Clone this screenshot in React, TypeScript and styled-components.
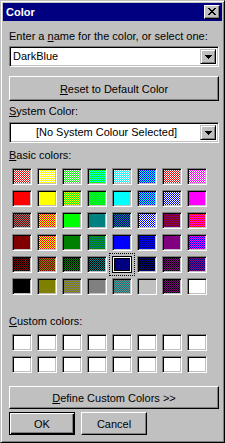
import React from "react";
import styled, { createGlobalStyle, css } from "styled-components";

const GlobalStyle = createGlobalStyle`
  html, body { margin: 0; padding: 0; background: #c0c0c0; }
  body { font-family: "Liberation Sans", Arial, sans-serif; font-size: 11px; }
  * { box-sizing: border-box; }
`;

const Window = styled.div`
  width: 225px;
  height: 443px;
  background: #c0c0c0;
  border: 1px solid;
  border-color: #c0c0c0 #000 #000 #c0c0c0;
  box-shadow: inset 1px 1px #fff, inset -1px -1px #808080;
  padding: 2px;
  display: flex;
  flex-direction: column;
`;

const TitleBar = styled.div`
  height: 18px;
  background: #000080;
  display: flex;
  align-items: center;
  justify-content: space-between;
  padding: 0 2px 0 3px;
`;

const TitleText = styled.span`
  color: #fff;
  font-weight: bold;
  font-size: 11px;
  line-height: 13px;
`;

const CloseButton = styled.div`
  width: 16px;
  height: 14px;
  background: #c0c0c0;
  border: 1px solid;
  border-color: #fff #000 #000 #fff;
  box-shadow: inset -1px -1px #808080;
  display: flex;
  align-items: center;
  justify-content: center;
  padding: 0 1px 1px 0;
`;

const Body = styled.div`
  display: flex;
  flex-direction: column;
  padding: 0 3px 0 6px;
`;

const Label = styled.div<{ $mt: number }>`
  margin-top: ${(p) => p.$mt}px;
  height: 13px;
  line-height: 13px;
  font-size: 11px;
  color: #000;
  white-space: nowrap;
`;

const Mn = styled.span`
  text-decoration: underline;
`;

const Combo = styled.div<{ $mt: number }>`
  margin-top: ${(p) => p.$mt}px;
  width: 210px;
  height: 21px;
  background: #fff;
  border: 1px solid;
  border-color: #808080 #fff #fff #808080;
  box-shadow: inset 1px 1px #000, inset -1px -1px #c0c0c0;
  padding: 2px;
  display: flex;
  align-items: stretch;
`;

const ComboText = styled.div<{ $center?: boolean }>`
  flex: 1;
  line-height: 15px;
  font-size: 11px;
  color: #000;
  padding-left: 1px;
  white-space: nowrap;
  ${(p) =>
    p.$center &&
    css`
      text-align: center;
    `}
`;

const DropButton = styled.div`
  width: 16px;
  background: #c0c0c0;
  border: 1px solid;
  border-color: #c0c0c0 #000 #000 #c0c0c0;
  box-shadow: inset 1px 1px #fff, inset -1px -1px #808080;
  display: flex;
  align-items: center;
  justify-content: center;
`;

const Button = styled.div<{ $mt?: number; $w?: number; $h?: number; $default?: boolean }>`
  margin-top: ${(p) => p.$mt ?? 0}px;
  width: ${(p) => p.$w ?? 210}px;
  height: ${(p) => p.$h ?? 23}px;
  background: #c0c0c0;
  display: flex;
  align-items: center;
  justify-content: center;
  font-size: 11px;
  color: #000;
  white-space: nowrap;
  ${(p) =>
    p.$default
      ? css`
          border: 1px solid #000;
          box-shadow: inset 1px 1px #fff, inset -1px -1px #000, inset -2px -2px #808080;
        `
      : css`
          border: 1px solid;
          border-color: #fff #000 #000 #fff;
          box-shadow: inset -1px -1px #808080;
        `}
`;

const ButtonRow = styled.div`
  margin-top: 3px;
  display: flex;
  gap: 6px;
`;

const SwatchGrid = styled.div<{ $mt: number }>`
  margin-top: ${(p) => p.$mt}px;
  margin-left: 3px;
  display: grid;
  grid-template-columns: repeat(8, 20px);
  grid-auto-rows: 17px;
  column-gap: 5px;
  row-gap: 5px;
`;

const Swatch = styled.div<{ $selected?: boolean }>`
  width: 20px;
  height: 17px;
  border: 1px solid;
  border-color: #808080 #fff #fff #808080;
  padding: 1px;
  box-shadow: inset 1px 1px #000, inset -1px -1px #c0c0c0;
  ${(p) =>
    p.$selected &&
    css`
      border-color: #000;
      box-shadow: inset 1px 1px #fff, inset -1px -1px #fff;
      outline: 1px dotted #000;
      outline-offset: 2px;
    `}
`;

const SwatchFill = styled.div<{ $selected?: boolean }>`
  width: 100%;
  height: 100%;
  ${(p) =>
    p.$selected &&
    css`
      border: 1px solid #000;
    `}
`;

const DitherSvg = styled.svg`
  display: block;
  width: 100%;
  height: 100%;
`;

type Sw = [string, string?];

const basic: Sw[] = [
  ["#ff0000", "#ffffff"], ["#ffff00", "#ffffff"], ["#00ff00", "#ffffff"], ["#00ff00", "#00ffff"],
  ["#00ffff", "#ffffff"], ["#0000ff", "#00ffff"], ["#ff0000", "#ffffff"], ["#ff00ff", "#ffffff"],
  ["#ff0000"], ["#ffff00"], ["#00ff00", "#ffff00"], ["#00ff00", "#00e040"],
  ["#00ffff"], ["#0000ff", "#00ffff"], ["#0000ff", "#ffffff"], ["#ff00ff"],
  ["#800000", "#808080"], ["#ff0000", "#ffff00"], ["#00ff00"], ["#008080"],
  ["#000080", "#008080"], ["#0000ff", "#ffffff"], ["#800000", "#800080"], ["#ff0000", "#ff00ff"],
  ["#800000"], ["#ff0000", "#ffff00"], ["#008000"], ["#008000", "#008080"],
  ["#0000ff"], ["#0000ff", "#000080"], ["#800080"], ["#ff00ff", "#0000ff"],
  ["#800000", "#000000"], ["#800000", "#808000"], ["#008000", "#000000"], ["#008080", "#000000"],
  ["#000080"], ["#000080", "#000000"], ["#800080", "#000000"], ["#800080", "#000080"],
  ["#000000"], ["#808000"], ["#808000", "#808080"], ["#808080"],
  ["#008080", "#808080"], ["#c0c0c0"], ["#800080", "#000000"], ["#ffffff"],
];

const SELECTED = 36;

const Fill = ({ id, c1, c2 }: { id: string; c1: string; c2?: string }) => (
  <DitherSvg shapeRendering="crispEdges">
    {c2 && (
      <defs>
        <pattern id={id} width="2" height="2" patternUnits="userSpaceOnUse">
          <rect x="0" y="0" width="2" height="2" fill={c1} />
          <rect x="0" y="0" width="1" height="1" fill={c2} />
          <rect x="1" y="1" width="1" height="1" fill={c2} />
        </pattern>
      </defs>
    )}
    <rect x="0" y="0" width="100%" height="100%" fill={c2 ? `url(#${id})` : c1} />
  </DitherSvg>
);

const Arrow = () => (
  <svg width="7" height="4" viewBox="0 0 7 4" shapeRendering="crispEdges">
    <rect x="0" y="0" width="7" height="1" fill="#000" />
    <rect x="1" y="1" width="5" height="1" fill="#000" />
    <rect x="2" y="2" width="3" height="1" fill="#000" />
    <rect x="3" y="3" width="1" height="1" fill="#000" />
  </svg>
);

const CloseGlyph = () => {
  const rows = ["XX....XX", ".XX..XX.", "..XXXX..", "...XX...", "..XXXX..", ".XX..XX.", "XX....XX"];
  return (
    <svg width="8" height="7" viewBox="0 0 8 7" shapeRendering="crispEdges">
      {rows.flatMap((r, y) =>
        r.split("").map((ch, x) =>
          ch === "X" ? <rect key={`${x}-${y}`} x={x} y={y} width="1" height="1" fill="#000" /> : null
        )
      )}
    </svg>
  );
};

export default function App() {
  return (
    <>
      <GlobalStyle />
      <Window>
        <TitleBar>
          <TitleText>Color</TitleText>
          <CloseButton>
            <CloseGlyph />
          </CloseButton>
        </TitleBar>
        <Body>
          <Label $mt={9}>
            Enter a <Mn>n</Mn>ame for the color, or select one:
          </Label>
          <Combo $mt={3}>
            <ComboText>DarkBlue</ComboText>
            <DropButton>
              <Arrow />
            </DropButton>
          </Combo>
          <Button $mt={9} $h={25}>
            <Mn>R</Mn>eset to Default Color
          </Button>
          <Label $mt={4}>
            <Mn>S</Mn>ystem Color:
          </Label>
          <Combo $mt={4}>
            <ComboText $center>[No System Colour Selected]</ComboText>
            <DropButton>
              <Arrow />
            </DropButton>
          </Combo>
          <Label $mt={6}>
            <Mn>B</Mn>asic colors:
          </Label>
          <SwatchGrid $mt={6}>
            {basic.map(([c1, c2], i) => (
              <Swatch key={i} $selected={i === SELECTED}>
                <SwatchFill $selected={i === SELECTED}>
                  <Fill id={`d${i}`} c1={c1} c2={c2} />
                </SwatchFill>
              </Swatch>
            ))}
          </SwatchGrid>
          <Label $mt={20}>
            <Mn>C</Mn>ustom colors:
          </Label>
          <SwatchGrid $mt={6}>
            {Array.from({ length: 16 }).map((_, i) => (
              <Swatch key={i}>
                <SwatchFill>
                  <Fill id={`c${i}`} c1="#ffffff" />
                </SwatchFill>
              </Swatch>
            ))}
          </SwatchGrid>
          <Button $mt={13}>
            <Mn>D</Mn>efine Custom Colors &gt;&gt;
          </Button>
          <ButtonRow>
            <Button $w={66} $default>
              OK
            </Button>
            <Button $w={66}>Cancel</Button>
          </ButtonRow>
        </Body>
      </Window>
    </>
  );
}
